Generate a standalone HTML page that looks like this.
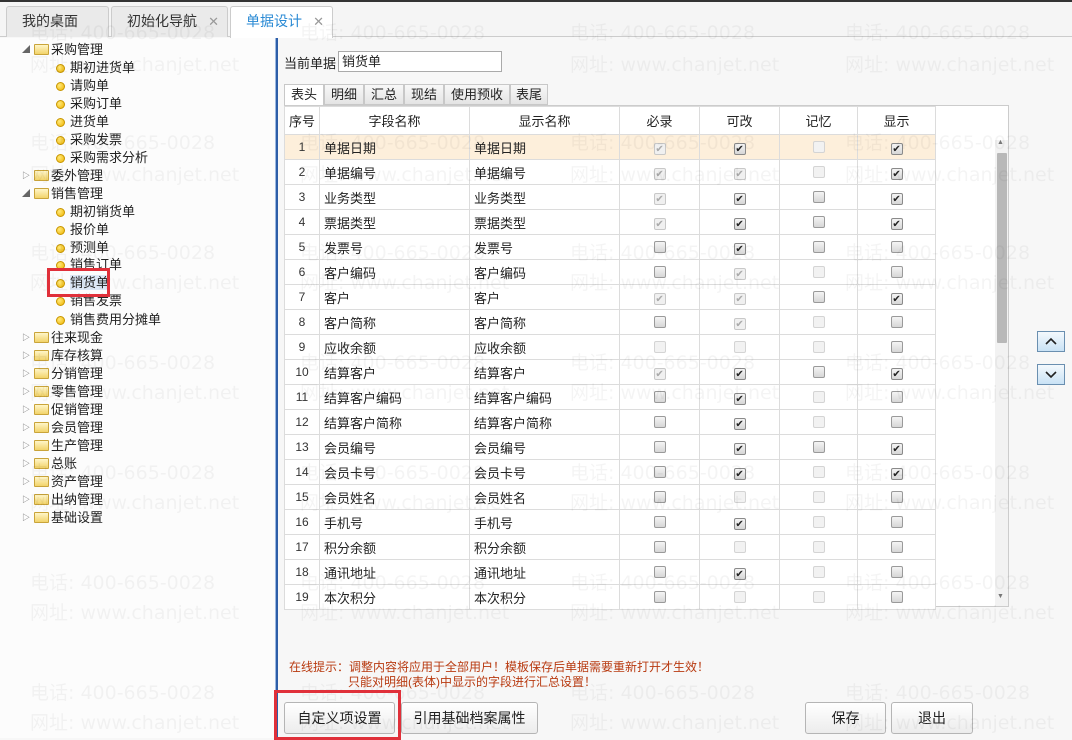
<!DOCTYPE html>
<html><head><meta charset="utf-8"><style>
*{margin:0;padding:0;box-sizing:border-box}
body{width:1072px;height:738px;overflow:hidden;background:#f7f7f7;font-family:"Liberation Sans","Noto Sans CJK SC",sans-serif;font-size:13px;color:#222;position:relative}
.a{position:absolute}
.wm{position:absolute;font-family:"DejaVu Sans","Noto Sans CJK SC",sans-serif;font-size:19px;color:rgba(0,0,0,0.045);white-space:nowrap;z-index:50;pointer-events:none}
.tab{position:absolute;top:6px;height:31px;border:1px solid #ccc;border-bottom:none;border-radius:3px 3px 0 0;background:#eaeaea;font-size:14px;line-height:29px;padding-left:15px;color:#333}
.tab .x{position:absolute;right:8px;color:#999;font-size:13px}
.tree div{position:absolute;font-size:13px;line-height:18px;white-space:nowrap}
.fold{display:inline-block;width:15px;height:11px;background:linear-gradient(#fff6c8,#f2d36a);border:1px solid #c9a43a;border-radius:1px;vertical-align:-1px;margin-right:2px}
.arr{position:absolute;left:-12px;top:0;font-size:8px;color:#666}
.dot{display:inline-block;width:9px;height:9px;border-radius:50%;background:radial-gradient(circle at 35% 35%,#ffe97a,#f0b400);border:1px solid #c89600;margin-right:5px;vertical-align:-1px}
.stab{position:absolute;top:84px;height:21px;border:1px solid #c8c8c8;background:linear-gradient(#f8f8f8,#e4e4e4);font-size:13px;line-height:19px;text-align:center}
table{position:absolute;left:284px;top:106px;border-collapse:collapse;background:#fff;table-layout:fixed}
td{border:1px solid #dcdcdc;height:25px;font-size:13px;padding:0 4px;white-space:nowrap;overflow:hidden}
td.n{text-align:center;color:#333;font-size:12px}
td.c{text-align:center}
tr.h td{height:28px;text-align:center}
tr.sel td{background:#fdefdb}
i{display:inline-block;width:12px;height:12px;border-radius:2px;vertical-align:-1px;font-style:normal;font-size:10px;line-height:11px;text-align:center}
i.e{border:1px solid #9a9a9a;background:linear-gradient(#f4f4f4,#d6d6d6)}
i.c{border:1px solid #8a8a8a;background:linear-gradient(#f4f4f4,#d6d6d6);color:#222}
i.d{border:1px solid #c8c8c8;background:#f0f0f0;color:#aaa}
i.g{border:1px solid #d4d4d4;background:#f2f2f2}
.btn{position:absolute;top:702px;height:32px;border:1px solid #b5b5b5;border-radius:3px;background:linear-gradient(#fff,#ececec);font-size:14px;line-height:30px;text-align:center;color:#222}
.sb{position:absolute;left:1037px;width:28px;height:21px;border:1px solid #6a8fb0;background:linear-gradient(#f4f9fd,#c9e2f5)}
</style></head><body>
<div class="a" style="left:0;top:0;width:1072px;height:2px;background:#333"></div>
<div class="a" style="left:0;top:2px;width:1072px;height:35px;background:#f5f5f5;border-bottom:1px solid #ccc"></div>
<div class="tab" style="left:6px;width:103px">我的桌面</div>
<div class="tab" style="left:111px;width:117px">初始化导航<span class="x">✕</span></div>
<div class="tab" style="left:230px;width:103px;background:#fff;color:#2a8ad4;height:32px">单据设计<span class="x">✕</span></div>

<div class="a" style="left:0;top:38px;width:275px;height:700px;background:#fcfcfc"></div>
<div class="a" style="left:275px;top:38px;width:3px;height:700px;background:#2d5ea8;border-left:1px solid #9bb8e0"></div>

<div class="tree">
<div style="left:34px;top:41px"><span class="arr">◢</span><span class="fold"></span>采购管理</div>
<div style="left:56px;top:59px"><span class="dot"></span>期初进货单</div>
<div style="left:56px;top:77px"><span class="dot"></span>请购单</div>
<div style="left:56px;top:95px"><span class="dot"></span>采购订单</div>
<div style="left:56px;top:113px"><span class="dot"></span>进货单</div>
<div style="left:56px;top:131px"><span class="dot"></span>采购发票</div>
<div style="left:56px;top:149px"><span class="dot"></span>采购需求分析</div>
<div style="left:34px;top:167px"><span class="arr">▷</span><span class="fold"></span>委外管理</div>
<div style="left:34px;top:185px"><span class="arr">◢</span><span class="fold"></span>销售管理</div>
<div style="left:56px;top:203px"><span class="dot"></span>期初销货单</div>
<div style="left:56px;top:221px"><span class="dot"></span>报价单</div>
<div style="left:56px;top:239px"><span class="dot"></span>预测单</div>
<div style="left:56px;top:256px"><span class="dot"></span>销售订单</div>
<div style="left:56px;top:274px"><span class="dot"></span><span style="background:#dde8f6">销货单</span></div>
<div style="left:56px;top:292px"><span class="dot"></span>销售发票</div>
<div style="left:56px;top:311px"><span class="dot"></span>销售费用分摊单</div>
<div style="left:34px;top:329px"><span class="arr">▷</span><span class="fold"></span>往来现金</div>
<div style="left:34px;top:347px"><span class="arr">▷</span><span class="fold"></span>库存核算</div>
<div style="left:34px;top:365px"><span class="arr">▷</span><span class="fold"></span>分销管理</div>
<div style="left:34px;top:383px"><span class="arr">▷</span><span class="fold"></span>零售管理</div>
<div style="left:34px;top:401px"><span class="arr">▷</span><span class="fold"></span>促销管理</div>
<div style="left:34px;top:419px"><span class="arr">▷</span><span class="fold"></span>会员管理</div>
<div style="left:34px;top:437px"><span class="arr">▷</span><span class="fold"></span>生产管理</div>
<div style="left:34px;top:455px"><span class="arr">▷</span><span class="fold"></span>总账</div>
<div style="left:34px;top:473px"><span class="arr">▷</span><span class="fold"></span>资产管理</div>
<div style="left:34px;top:491px"><span class="arr">▷</span><span class="fold"></span>出纳管理</div>
<div style="left:34px;top:509px"><span class="arr">▷</span><span class="fold"></span>基础设置</div>
</div>
<div class="a" style="left:47px;top:268px;width:63px;height:29px;border:3px solid #e0303a;z-index:60"></div>

<div class="a" style="left:284px;top:53px;font-size:13px">当前单据</div>
<div class="a" style="left:338px;top:51px;width:164px;height:21px;border:1px solid #aaa;background:#fff;font-size:13px;line-height:19px;padding-left:3px">销货单</div>

<div class="stab" style="left:284px;width:40px;background:#fff;height:22px">表头</div>
<div class="stab" style="left:324px;width:40px">明细</div>
<div class="stab" style="left:364px;width:40px">汇总</div>
<div class="stab" style="left:404px;width:40px">现结</div>
<div class="stab" style="left:444px;width:66px">使用预收</div>
<div class="stab" style="left:510px;width:38px">表尾</div>

<div class="a" style="left:284px;top:105px;width:725px;height:502px;background:#fff;border:1px solid #ccc"></div>
<table>
<colgroup><col style="width:35px"><col style="width:150px"><col style="width:150px"><col style="width:80px"><col style="width:80px"><col style="width:78px"><col style="width:78px"></colgroup>
<tr class="h"><td>序号</td><td>字段名称</td><td>显示名称</td><td>必录</td><td>可改</td><td>记忆</td><td>显示</td></tr>
<tr class="sel"><td class="n">1</td><td>单据日期</td><td>单据日期</td><td class="c"><i class="d">✔</i></td><td class="c"><i class="c">✔</i></td><td class="c"><i class="g"></i></td><td class="c"><i class="c">✔</i></td></tr>
<tr><td class="n">2</td><td>单据编号</td><td>单据编号</td><td class="c"><i class="d">✔</i></td><td class="c"><i class="d">✔</i></td><td class="c"><i class="g"></i></td><td class="c"><i class="c">✔</i></td></tr>
<tr><td class="n">3</td><td>业务类型</td><td>业务类型</td><td class="c"><i class="d">✔</i></td><td class="c"><i class="c">✔</i></td><td class="c"><i class="e"></i></td><td class="c"><i class="c">✔</i></td></tr>
<tr><td class="n">4</td><td>票据类型</td><td>票据类型</td><td class="c"><i class="d">✔</i></td><td class="c"><i class="c">✔</i></td><td class="c"><i class="e"></i></td><td class="c"><i class="c">✔</i></td></tr>
<tr><td class="n">5</td><td>发票号</td><td>发票号</td><td class="c"><i class="e"></i></td><td class="c"><i class="c">✔</i></td><td class="c"><i class="e"></i></td><td class="c"><i class="e"></i></td></tr>
<tr><td class="n">6</td><td>客户编码</td><td>客户编码</td><td class="c"><i class="e"></i></td><td class="c"><i class="d">✔</i></td><td class="c"><i class="g"></i></td><td class="c"><i class="e"></i></td></tr>
<tr><td class="n">7</td><td>客户</td><td>客户</td><td class="c"><i class="d">✔</i></td><td class="c"><i class="d">✔</i></td><td class="c"><i class="e"></i></td><td class="c"><i class="c">✔</i></td></tr>
<tr><td class="n">8</td><td>客户简称</td><td>客户简称</td><td class="c"><i class="e"></i></td><td class="c"><i class="d">✔</i></td><td class="c"><i class="g"></i></td><td class="c"><i class="e"></i></td></tr>
<tr><td class="n">9</td><td>应收余额</td><td>应收余额</td><td class="c"><i class="g"></i></td><td class="c"><i class="g"></i></td><td class="c"><i class="g"></i></td><td class="c"><i class="e"></i></td></tr>
<tr><td class="n">10</td><td>结算客户</td><td>结算客户</td><td class="c"><i class="d">✔</i></td><td class="c"><i class="c">✔</i></td><td class="c"><i class="e"></i></td><td class="c"><i class="c">✔</i></td></tr>
<tr><td class="n">11</td><td>结算客户编码</td><td>结算客户编码</td><td class="c"><i class="e"></i></td><td class="c"><i class="c">✔</i></td><td class="c"><i class="g"></i></td><td class="c"><i class="e"></i></td></tr>
<tr><td class="n">12</td><td>结算客户简称</td><td>结算客户简称</td><td class="c"><i class="e"></i></td><td class="c"><i class="c">✔</i></td><td class="c"><i class="g"></i></td><td class="c"><i class="e"></i></td></tr>
<tr><td class="n">13</td><td>会员编号</td><td>会员编号</td><td class="c"><i class="e"></i></td><td class="c"><i class="c">✔</i></td><td class="c"><i class="e"></i></td><td class="c"><i class="c">✔</i></td></tr>
<tr><td class="n">14</td><td>会员卡号</td><td>会员卡号</td><td class="c"><i class="e"></i></td><td class="c"><i class="c">✔</i></td><td class="c"><i class="g"></i></td><td class="c"><i class="c">✔</i></td></tr>
<tr><td class="n">15</td><td>会员姓名</td><td>会员姓名</td><td class="c"><i class="e"></i></td><td class="c"><i class="g"></i></td><td class="c"><i class="g"></i></td><td class="c"><i class="e"></i></td></tr>
<tr><td class="n">16</td><td>手机号</td><td>手机号</td><td class="c"><i class="e"></i></td><td class="c"><i class="c">✔</i></td><td class="c"><i class="g"></i></td><td class="c"><i class="e"></i></td></tr>
<tr><td class="n">17</td><td>积分余额</td><td>积分余额</td><td class="c"><i class="e"></i></td><td class="c"><i class="g"></i></td><td class="c"><i class="g"></i></td><td class="c"><i class="e"></i></td></tr>
<tr><td class="n">18</td><td>通讯地址</td><td>通讯地址</td><td class="c"><i class="e"></i></td><td class="c"><i class="c">✔</i></td><td class="c"><i class="g"></i></td><td class="c"><i class="e"></i></td></tr>
<tr><td class="n">19</td><td>本次积分</td><td>本次积分</td><td class="c"><i class="e"></i></td><td class="c"><i class="g"></i></td><td class="c"><i class="g"></i></td><td class="c"><i class="e"></i></td></tr>
</table>
<div class="a" style="left:995px;top:140px;width:13px;height:466px;background:#f2f2f2"></div>
<div class="a" style="left:997px;top:139px;font-size:7px;color:#777">▲</div>
<div class="a" style="left:997px;top:153px;width:10px;height:190px;background:#b8b8b8;border-radius:1px"></div>
<div class="a" style="left:997px;top:593px;font-size:7px;color:#777">▼</div>

<div class="sb" style="top:331px"><svg width="26" height="19"><path d="M8 12 L13 7 L18 12" fill="none" stroke="#222" stroke-width="1.6"/></svg></div>
<div class="sb" style="top:364px"><svg width="26" height="19"><path d="M8 7 L13 12 L18 7" fill="none" stroke="#222" stroke-width="1.6"/></svg></div>

<div class="a" style="left:289px;top:660px;font-size:12px;color:#b83a10;line-height:15px">在线提示：调整内容将应用于全部用户！模板保存后单据需要重新打开才生效！</div>
<div class="a" style="left:348px;top:675px;font-size:12px;color:#b83a10;line-height:15px">只能对明细(表体)中显示的字段进行汇总设置！</div>

<div class="btn" style="left:284px;width:111px">自定义项设置</div>
<div class="btn" style="left:401px;width:137px">引用基础档案属性</div>
<div class="btn" style="left:805px;width:81px">保存</div>
<div class="btn" style="left:891px;width:82px">退出</div>
<div class="a" style="left:274px;top:690px;width:127px;height:50px;border:3px solid #e0303a;z-index:60"></div>

<div class="wm" style="left:30px;top:18px">电话: 400-665-0028</div><div class="wm" style="left:300px;top:18px">电话: 400-665-0028</div><div class="wm" style="left:570px;top:18px">电话: 400-665-0028</div><div class="wm" style="left:845px;top:18px">电话: 400-665-0028</div>
<div class="wm" style="left:30px;top:50px">网址: www.chanjet.net</div><div class="wm" style="left:570px;top:50px">网址: www.chanjet.net</div><div class="wm" style="left:845px;top:50px">网址: www.chanjet.net</div>
<div class="wm" style="left:30px;top:128px">电话: 400-665-0028</div><div class="wm" style="left:300px;top:128px">电话: 400-665-0028</div><div class="wm" style="left:570px;top:128px">电话: 400-665-0028</div><div class="wm" style="left:845px;top:128px">电话: 400-665-0028</div>
<div class="wm" style="left:30px;top:160px">网址: www.chanjet.net</div><div class="wm" style="left:300px;top:160px">网址: www.chanjet.net</div><div class="wm" style="left:570px;top:160px">网址: www.chanjet.net</div><div class="wm" style="left:845px;top:160px">网址: www.chanjet.net</div>
<div class="wm" style="left:30px;top:238px">电话: 400-665-0028</div><div class="wm" style="left:300px;top:238px">电话: 400-665-0028</div><div class="wm" style="left:570px;top:238px">电话: 400-665-0028</div><div class="wm" style="left:845px;top:238px">电话: 400-665-0028</div>
<div class="wm" style="left:30px;top:268px">网址: www.chanjet.net</div><div class="wm" style="left:300px;top:268px">网址: www.chanjet.net</div><div class="wm" style="left:570px;top:268px">网址: www.chanjet.net</div><div class="wm" style="left:845px;top:268px">网址: www.chanjet.net</div>
<div class="wm" style="left:30px;top:348px">电话: 400-665-0028</div><div class="wm" style="left:300px;top:348px">电话: 400-665-0028</div><div class="wm" style="left:570px;top:348px">电话: 400-665-0028</div><div class="wm" style="left:845px;top:348px">电话: 400-665-0028</div>
<div class="wm" style="left:30px;top:378px">网址: www.chanjet.net</div><div class="wm" style="left:300px;top:378px">网址: www.chanjet.net</div><div class="wm" style="left:570px;top:378px">网址: www.chanjet.net</div><div class="wm" style="left:845px;top:378px">网址: www.chanjet.net</div>
<div class="wm" style="left:30px;top:458px">电话: 400-665-0028</div><div class="wm" style="left:300px;top:458px">电话: 400-665-0028</div><div class="wm" style="left:570px;top:458px">电话: 400-665-0028</div><div class="wm" style="left:845px;top:458px">电话: 400-665-0028</div>
<div class="wm" style="left:30px;top:488px">网址: www.chanjet.net</div><div class="wm" style="left:300px;top:488px">网址: www.chanjet.net</div><div class="wm" style="left:570px;top:488px">网址: www.chanjet.net</div><div class="wm" style="left:845px;top:488px">网址: www.chanjet.net</div>
<div class="wm" style="left:30px;top:568px">电话: 400-665-0028</div><div class="wm" style="left:300px;top:568px">电话: 400-665-0028</div><div class="wm" style="left:570px;top:568px">电话: 400-665-0028</div><div class="wm" style="left:845px;top:568px">电话: 400-665-0028</div>
<div class="wm" style="left:30px;top:598px">网址: www.chanjet.net</div><div class="wm" style="left:300px;top:598px">网址: www.chanjet.net</div><div class="wm" style="left:570px;top:598px">网址: www.chanjet.net</div><div class="wm" style="left:845px;top:598px">网址: www.chanjet.net</div>
<div class="wm" style="left:30px;top:678px">电话: 400-665-0028</div><div class="wm" style="left:300px;top:678px">电话: 400-665-0028</div><div class="wm" style="left:570px;top:678px">电话: 400-665-0028</div><div class="wm" style="left:845px;top:678px">电话: 400-665-0028</div>
<div class="wm" style="left:30px;top:708px">网址: www.chanjet.net</div><div class="wm" style="left:300px;top:708px">网址: www.chanjet.net</div><div class="wm" style="left:570px;top:708px">网址: www.chanjet.net</div><div class="wm" style="left:845px;top:708px">网址: www.chanjet.net</div>
</body></html>
